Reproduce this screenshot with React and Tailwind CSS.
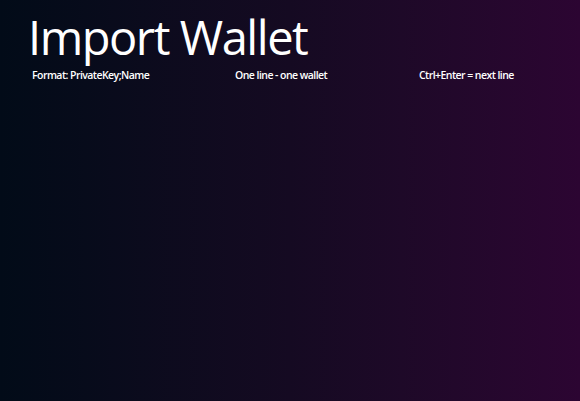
import React from "react";

const hints = [
  { text: "Format: PrivateKey;Name", width: "w-[203px]" },
  { text: "One line - one wallet", width: "w-[184px]" },
  { text: "Ctrl+Enter = next line", width: "w-auto" },
];

const App = () => {
  return (
    <div
      className="w-[580px] h-[401px] overflow-hidden bg-gradient-to-r from-[#020b18] via-[#150a22] to-[#2c0532] text-white"
      style={{ fontFamily: '"Open Sans", "Noto Sans", sans-serif' }}
    >
      <div className="pl-[28px] pt-[7px]">
        <h1 className="text-[47px] leading-[60px] font-normal tracking-[-1.45px]">
          Import Wallet
        </h1>
        <div className="flex pl-[4px] mt-[1px] text-[10.5px] leading-[14px] font-semibold tracking-[-0.55px]">
          {hints.map((hint) => (
            <span key={hint.text} className={hint.width}>
              {hint.text}
            </span>
          ))}
        </div>
      </div>
    </div>
  );
};

export default App;
